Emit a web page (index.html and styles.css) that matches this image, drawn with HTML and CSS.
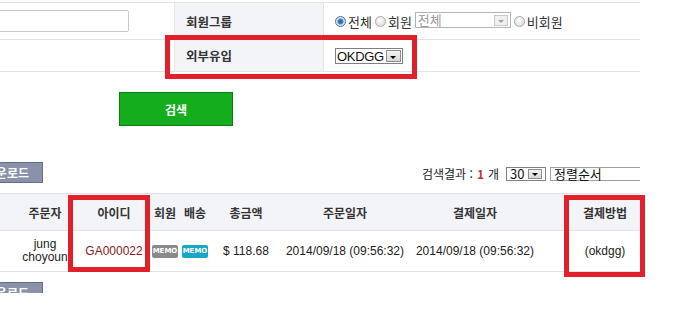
FILE: index.html
```html
<!DOCTYPE html>
<html lang="ko">

<head>
  <meta charset="UTF-8">
  <title>주문 검색</title>
  <link rel="stylesheet" href="styles.css">
</head>

<body>
  <div class="page">
    <div class="search-form">
      <div class="cell"><div class="text-input"></div></div>
      <div class="cell label">회원그룹</div>
      <div class="cell value">
        <span class="radio checked"></span><span class="opt">전체</span>
        <span class="radio"></span><span class="opt">회원</span>
        <span class="select disabled grade">전체<i class="arrow"></i></span>
        <span class="radio"></span><span class="opt">비회원</span>
      </div>
      <div class="cell"></div>
      <div class="cell label">외부유입</div>
      <div class="cell value">
        <span class="select inflow">OKDGG<i class="arrow"></i></span>
      </div>
    </div>

    <div class="search-row">
      <button class="btn-search">검색</button>
    </div>

    <div class="list-tools">
      <button class="btn-excel">엑셀다운로드</button>
      <div class="result-info">
        검색결과 : <b>1</b> 개
        <span class="select per-page">30<i class="arrow"></i></span>
        <span class="select sort">정렬순서</span>
      </div>
    </div>

    <table class="order-table">
      <colgroup>
        <col style="width: 98px">
        <col style="width: 72px">
        <col style="width: 30px">
        <col style="width: 30px">
        <col style="width: 72px">
        <col style="width: 126px">
        <col style="width: 134px">
        <col style="width: 98px">
      </colgroup>
      <thead>
        <tr>
          <th class="first">주문자</th>
          <th>아이디</th>
          <th>회원</th>
          <th>배송</th>
          <th>총금액</th>
          <th>주문일자</th>
          <th>결제일자</th>
          <th class="last">결제방법</th>
        </tr>
      </thead>
      <tbody>
        <tr>
          <td class="first">jung choyoun</td>
          <td class="user-id">GA000022</td>
          <td><span class="memo">MEMO</span></td>
          <td><span class="memo blue">MEMO</span></td>
          <td>$ 118.68</td>
          <td>2014/09/18 (09:56:32)</td>
          <td>2014/09/18 (09:56:32)</td>
          <td class="last">(okdgg)</td>
        </tr>
      </tbody>
    </table>

    <div class="bottom-tools">
      <button class="btn-excel">엑셀다운로드</button>
    </div>

    <!-- red highlight boxes drawn over the screenshot -->
    <div class="mark mark-inflow"></div>
    <div class="mark mark-id"></div>
    <div class="mark mark-pay"></div>
  </div>
</body>

</html>
```

FILE: styles.css
```css
body {
  margin: 0;
  background: #fff;
  color: #333;
  font-family: "Liberation Sans", "Noto Sans CJK KR", sans-serif;
  font-size: 12px;
  overflow: hidden;
}

.page {
  position: relative;
  width: 640px;
  padding-top: 2px;
}

/* search form */
.search-form {
  display: grid;
  grid-template-columns: 174px 150px 1fr;
  grid-template-rows: 37px 32px;
  border-top: 1px solid #e3e3e3;
}

.cell {
  display: flex;
  align-items: center;
  border-bottom: 1px solid #e3e3e3;
}

.label {
  background: #f3f4f8;
  border-left: 1px solid #e8e8ec;
  border-right: 1px solid #e3e3e3;
  padding-left: 11px;
  font-family: "Noto Sans CJK KR", sans-serif;
  font-size: 12.5px;
  font-weight: bold;
  color: #333;
}

.value {
  padding-left: 11px;
}

.text-input {
  margin-left: -10px;
  width: 137px;
  height: 20px;
  border: 1px solid #c9c9c9;
  border-radius: 2px;
  background: #fff;
}

.radio {
  display: inline-block;
  width: 11px;
  height: 11px;
  border-radius: 50%;
  border: 1px solid #a8a8a8;
  background: radial-gradient(circle at 40% 35%, #fff, #d4d4d4);
  box-sizing: border-box;
  margin-right: 2px;
}

.radio.checked {
  border-color: #4f6f8f;
  background: radial-gradient(circle, #1d5f9a 0, #3a89c9 2.5px, #dbe6ef 3.5px, #c5d2de 100%);
}

.opt {
  margin-right: 3px;
  font-family: "Noto Sans CJK KR", sans-serif;
  font-size: 13px;
  color: #333;
}

.select {
  position: relative;
  display: inline-flex;
  align-items: center;
  box-sizing: border-box;
  height: 15px;
  border: 1px solid #808080;
  background: #fff;
  padding-left: 2px;
  font-family: "Noto Sans CJK KR", sans-serif;
  font-size: 13px;
  line-height: 13px;
  color: #111;
}

.select .arrow {
  position: absolute;
  right: 1px;
  top: 1px;
  width: 14px;
  height: 11px;
  box-sizing: border-box;
  border: 1px solid #8c8c8c;
  background: linear-gradient(#f4f4f4, #d6d6d6);
}

.select .arrow::after {
  content: '';
  position: absolute;
  left: 3px;
  bottom: 2px;
  border-left: 3px solid transparent;
  border-right: 3px solid transparent;
  border-top: 3px solid #000;
}

.grade {
  width: 96px;
  height: 16px;
  margin-top: -3px;
  margin-right: 3px;
  border-color: #b4b4b4;
  color: #9a9a9a;
}

.grade .arrow {
  top: 2px;
  right: 2px;
  border-color: #c8c8c8;
  background: #f0f0f0;
}

.grade .arrow::after {
  border-top-color: #a0a0a0;
}

.inflow {
  width: 68px;
  height: 16px;
  margin-top: 1px;
  padding-left: 1px;
  font-family: "Liberation Sans", sans-serif;
  font-size: 13px;
  letter-spacing: -0.3px;
}

.inflow .arrow {
  height: 12px;
  width: 15px;
}

/* search button */
.search-row {
  padding: 20px 0 0 119px;
}

.btn-search {
  width: 114px;
  height: 34px;
  background: #13ad1d;
  border: 1px solid #0f7c15;
  color: #fff;
  font-family: "Noto Sans CJK KR", sans-serif;
  font-size: 12px;
  font-weight: bold;
  cursor: pointer;
}

/* list tools */
.list-tools {
  display: flex;
  justify-content: space-between;
  align-items: flex-end;
  margin-top: 36px;
}

.btn-excel {
  width: 90px;
  height: 21px;
  margin-left: -47px;
  padding: 0 13px 0 0;
  text-align: right;
  background: #8a91aa;
  border: 1px solid #666c84;
  color: #fff;
  font-family: "Noto Sans CJK KR", sans-serif;
  font-size: 12px;
  font-weight: bold;
  line-height: 19px;
}

.result-info {
  display: flex;
  align-items: center;
  width: 218px;
  overflow: hidden;
  white-space: nowrap;
  font-family: "Noto Sans CJK KR", sans-serif;
  font-size: 12px;
  color: #222;
  padding-bottom: 1px;
}

.result-info b {
  color: #c0392b;
  margin: 0 4px;
}

.per-page {
  width: 44px;
  height: 14px;
  margin-left: 7px;
  padding-left: 3px;
}

.per-page .arrow {
  right: 3px;
  top: 1px;
  height: 10px;
}

.sort {
  width: 100px;
  height: 14px;
  margin-left: 4px;
  border-color: #a0a0a0;
  border-right: none;
  padding-left: 3px;
}

/* order table */
.order-table {
  margin-top: 10px;
  margin-left: -20px;
  width: 660px;
  table-layout: fixed;
  border-collapse: collapse;
}

.order-table th {
  height: 36px;
  padding: 0;
  background: #f3f4f8;
  border-top: 1px solid #e3e3e3;
  border-bottom: 1px solid #e3e3e3;
  font-family: "Noto Sans CJK KR", sans-serif;
  font-size: 12px;
  font-weight: bold;
  color: #333;
  text-align: center;
}

.order-table td {
  height: 40px;
  padding: 0;
  border-bottom: 1px solid #e3e3e3;
  text-align: center;
  font-size: 12px;
  line-height: 13px;
  color: #222;
}

.order-table .first {
  padding-left: 32px;
}

.order-table .last {
  padding-left: 28px;
}

.order-table .user-id {
  color: #8b1a1a;
}

.memo {
  display: inline-block;
  width: 26px;
  height: 13px;
  border-radius: 2px;
  background: #8a8a8a;
  color: #fff;
  font-family: "DejaVu Sans", sans-serif;
  font-size: 7px;
  font-weight: bold;
  line-height: 13px;
  vertical-align: middle;
}

.memo.blue {
  background: #16a8c8;
}

.bottom-tools {
  margin-top: 10px;
  height: 11px;
  overflow: hidden;
}

/* highlight marks */
.mark {
  position: absolute;
  border: 5px solid #e2202a;
  box-sizing: border-box;
}

.mark-inflow {
  left: 165px;
  top: 35px;
  width: 252px;
  height: 44px;
}

.mark-id {
  left: 68px;
  top: 195px;
  width: 82px;
  height: 77px;
}

.mark-pay {
  left: 564px;
  top: 195px;
  width: 81px;
  height: 82px;
}
```
